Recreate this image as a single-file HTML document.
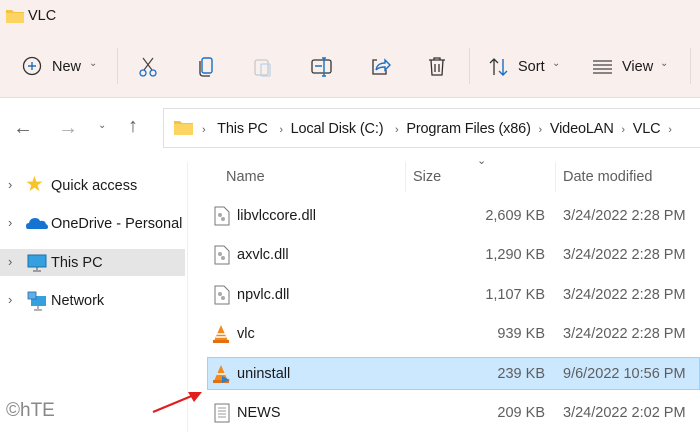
<!DOCTYPE html>
<html><head><style>
body{margin:0;width:700px;height:432px;overflow:hidden;background:#fff;font-family:"Liberation Sans",sans-serif;color:#1a1a1a;position:relative}
.a{position:absolute;white-space:nowrap}
.top{position:absolute;left:0;top:0;width:700px;height:97px;background:#f9f0ed;border-bottom:1px solid #e3dedc}
.t{font-size:14.5px}
.g{color:#5e5e5e}
.sep{position:absolute;width:1px;background:#e2dbd8}
</style></head><body>
<div class="top"></div>
<svg class="a" style="left:5px;top:8px" width="20" height="16"><path d="M1 2h6l2 2h10v11H1z" fill="#f5c342"/><path d="M1 5h18v10H1z" fill="#fcd462"/></svg>
<div class="a t" style="left:28px;top:8px">VLC</div>
<svg class="a" style="left:22px;top:56px" width="20" height="20"><circle cx="10" cy="10" r="8.5" fill="none" stroke="#333" stroke-width="1.3"/><path d="M10 6v8M6 10h8" stroke="#1a6fc4" stroke-width="1.4"/></svg>
<div class="a t" style="left:52px;top:59px">New</div>
<div class="a g" style="left:89px;top:58px;font-size:10px">⌄</div>
<div class="sep" style="left:117px;top:48px;height:36px"></div>
<svg class="a" style="left:138px;top:56px" width="20" height="22"><path d="M5 2l9 12M15 2L6 14" stroke="#444" stroke-width="1.2"/><circle cx="5" cy="17" r="3" fill="none" stroke="#1a6fc4" stroke-width="1.3"/><circle cx="15" cy="17" r="3" fill="none" stroke="#1a6fc4" stroke-width="1.3"/></svg>
<svg class="a" style="left:197px;top:56px" width="20" height="22"><rect x="5" y="2" width="10" height="15" rx="2" fill="none" stroke="#1a6fc4" stroke-width="1.4"/><path d="M3 5v12q0 3 3 3h7" fill="none" stroke="#333" stroke-width="1.3"/></svg>
<svg class="a" style="left:253px;top:56px" width="20" height="22"><rect x="2" y="4" width="13" height="15" rx="2" fill="none" stroke="#c8c8c8" stroke-width="1.3"/><rect x="8" y="8" width="9" height="12" rx="1" fill="none" stroke="#b8d4ee" stroke-width="1.3"/></svg>
<svg class="a" style="left:310px;top:56px" width="24" height="22"><rect x="2" y="4" width="19" height="13" rx="2" fill="none" stroke="#333" stroke-width="1.3"/><path d="M5 10h7M14 2v18M12 2h4M12 20h4" stroke="#1a6fc4" stroke-width="1.4"/></svg>
<svg class="a" style="left:369px;top:56px" width="22" height="22"><path d="M8 4H4v14h13v-4" fill="none" stroke="#333" stroke-width="1.3"/><path d="M7 14q1-7 9-7V4l5 5-5 5v-3q-6 0-9 3" fill="none" stroke="#1a6fc4" stroke-width="1.4"/></svg>
<svg class="a" style="left:427px;top:56px" width="20" height="22"><path d="M2 4h16M7 4V2h6v2M4 4l1 15h10l1-15M8 8v8M12 8v8" fill="none" stroke="#333" stroke-width="1.3"/></svg>
<div class="sep" style="left:469px;top:48px;height:36px"></div>
<svg class="a" style="left:488px;top:57px" width="22" height="20"><path d="M6 18V2M2 6l4-4 4 4" fill="none" stroke="#333" stroke-width="1.3"/><path d="M15 2v16M11 14l4 4 4-4" fill="none" stroke="#1a6fc4" stroke-width="1.4"/></svg>
<div class="a t" style="left:518px;top:59px">Sort</div>
<div class="a g" style="left:552px;top:58px;font-size:10px">⌄</div>
<svg class="a" style="left:592px;top:58px" width="22" height="16"><path d="M1 3h19M1 7h19M1 11h19M1 15h19" stroke="#444" stroke-width="1.3"/></svg>
<div class="a t" style="left:622px;top:59px">View</div>
<div class="a g" style="left:660px;top:58px;font-size:10px">⌄</div>
<div class="sep" style="left:690px;top:48px;height:36px"></div>

<div class="a g" style="left:13px;top:117px;font-size:20px">←</div>
<div class="a" style="left:58px;top:117px;font-size:20px;color:#aaa">→</div>
<div class="a g" style="left:98px;top:120px;font-size:10px">⌄</div>
<div class="a g" style="left:128px;top:115px;font-size:20px">↑</div>
<div class="a" style="left:163px;top:108px;width:560px;height:40px;border:1px solid #e0e0e0;box-sizing:border-box"></div>
<svg class="a" style="left:174px;top:120px" width="19" height="15"><path d="M0 1h6l2 2h11v12H0z" fill="#f5c342"/><path d="M0 4h19v11H0z" fill="#fcd462"/></svg>
<div class="a t" style="left:202px;top:121px;letter-spacing:-0.15px"><span class="g" style="font-size:11px">›</span>&nbsp;&nbsp;&nbsp;This PC&nbsp;&nbsp;&nbsp;<span class="g" style="font-size:11px">›</span>&nbsp;&nbsp;Local Disk (C:)&nbsp;&nbsp;&nbsp;<span class="g" style="font-size:11px">›</span>&nbsp;&nbsp;Program Files (x86)&nbsp;&nbsp;<span class="g" style="font-size:11px">›</span>&nbsp;&nbsp;VideoLAN&nbsp;&nbsp;<span class="g" style="font-size:11px">›</span>&nbsp;&nbsp;VLC&nbsp;&nbsp;<span class="g" style="font-size:11px">›</span></div>

<div class="a" style="left:187px;top:162px;width:1px;height:270px;background:#f0f0f0"></div>
<div class="a" style="left:0;top:249px;width:185px;height:27px;background:#e5e5e5"></div>
<div class="a g" style="left:8px;top:177px;font-size:13px">›</div>
<div class="a g" style="left:8px;top:215px;font-size:13px">›</div>
<div class="a g" style="left:8px;top:254px;font-size:13px">›</div>
<div class="a g" style="left:8px;top:292px;font-size:13px">›</div>
<div class="a" style="left:25px;top:172px;font-size:21px;color:#f7c325">★</div>
<svg class="a" style="left:26px;top:216px" width="22" height="14"><path d="M2 13q-2 0-2-3t3-3q1-5 6-5 4 0 5 3 5-1 6 3 2 1 2 3t-2 2z" fill="#1673d1"/></svg>
<svg class="a" style="left:27px;top:253px" width="20" height="20"><rect x="1" y="2" width="18" height="12" fill="#35a0e0" stroke="#1a6fa8"/><path d="M10 14v3M6 18h8" stroke="#555"/></svg>
<svg class="a" style="left:27px;top:291px" width="20" height="20"><rect x="4" y="5" width="15" height="10" fill="#35a0e0"/><rect x="1" y="1" width="8" height="7" fill="#5fb0e8" stroke="#2a6a9e" stroke-width=".8"/><path d="M11 15v3M7 19h8" stroke="#666"/></svg>
<div class="a t" style="left:51px;top:178px">Quick access</div>
<div class="a t" style="left:51px;top:216px">OneDrive - Personal</div>
<div class="a t" style="left:51px;top:255px">This PC</div>
<div class="a t" style="left:51px;top:293px">Network</div>
<div class="a" style="left:6px;top:400px;font-size:19px;color:#888">©hTE</div>
<svg class="a" style="left:150px;top:385px" width="56" height="30"><path d="M3 27L44 10" stroke="#e21d1d" stroke-width="2.2"/><path d="M52 7L38 7 44 17z" fill="#e21d1d"/></svg>

<div class="a g" style="left:477px;top:154px;font-size:11px">⌄</div>
<div class="a" style="left:405px;top:162px;width:1px;height:30px;background:#eee"></div>
<div class="a" style="left:555px;top:162px;width:1px;height:30px;background:#eee"></div>
<div class="a t g" style="left:226px;top:169px">Name</div>
<div class="a t g" style="left:413px;top:169px">Size</div>
<div class="a t g" style="left:563px;top:169px">Date modified</div>

<div class="a" style="left:207px;top:357px;width:493px;height:33px;background:#cce8ff;border:1px solid #99d1ff;box-sizing:border-box"></div>

<svg class="a" style="left:214px;top:206px" width="16" height="20"><path d="M1 1h9l5 5v13H1z" fill="#fff" stroke="#777"/><circle cx="6" cy="9" r="2" fill="#aaa"/><circle cx="9" cy="13" r="2" fill="#aaa"/></svg>
<svg class="a" style="left:214px;top:245px" width="16" height="20"><path d="M1 1h9l5 5v13H1z" fill="#fff" stroke="#777"/><circle cx="6" cy="9" r="2" fill="#aaa"/><circle cx="9" cy="13" r="2" fill="#aaa"/></svg>
<svg class="a" style="left:214px;top:285px" width="16" height="20"><path d="M1 1h9l5 5v13H1z" fill="#fff" stroke="#777"/><circle cx="6" cy="9" r="2" fill="#aaa"/><circle cx="9" cy="13" r="2" fill="#aaa"/></svg>
<svg class="a" style="left:212px;top:324px" width="18" height="20"><path d="M9 1L2 17h14z" fill="#f08a1c"/><path d="M5 10h8M4 13h10" stroke="#fff" stroke-width="1.5"/><rect x="1" y="16" width="16" height="3" fill="#e07010"/></svg>
<svg class="a" style="left:212px;top:364px" width="20" height="20"><path d="M9 1L2 17h14z" fill="#f08a1c"/><path d="M5 10h8" stroke="#fff" stroke-width="1.5"/><rect x="1" y="16" width="16" height="3" fill="#e07010"/><path d="M10 12l8 4-8 3z" fill="#2e7fd0"/></svg>
<svg class="a" style="left:214px;top:403px" width="16" height="20"><path d="M1 1h14v18H1z" fill="#fff" stroke="#777"/><path d="M4 5h8M4 8h8M4 11h8M4 14h8" stroke="#999"/></svg>

<div class="a t" style="left:237px;top:208px">libvlccore.dll</div>
<div class="a t" style="left:237px;top:247px">axvlc.dll</div>
<div class="a t" style="left:237px;top:287px">npvlc.dll</div>
<div class="a t" style="left:237px;top:326px">vlc</div>
<div class="a t" style="left:237px;top:366px">uninstall</div>
<div class="a t" style="left:237px;top:405px">NEWS</div>

<div class="a t g" style="right:155px;top:208px">2,609 KB</div>
<div class="a t g" style="right:155px;top:247px">1,290 KB</div>
<div class="a t g" style="right:155px;top:287px">1,107 KB</div>
<div class="a t g" style="right:155px;top:326px">939 KB</div>
<div class="a t g" style="right:155px;top:366px">239 KB</div>
<div class="a t g" style="right:155px;top:405px">209 KB</div>
<div class="a t g" style="left:563px;top:208px">3/24/2022 2:28 PM</div>
<div class="a t g" style="left:563px;top:247px">3/24/2022 2:28 PM</div>
<div class="a t g" style="left:563px;top:287px">3/24/2022 2:28 PM</div>
<div class="a t g" style="left:563px;top:326px">3/24/2022 2:28 PM</div>
<div class="a t g" style="left:563px;top:366px">9/6/2022 10:56 PM</div>
<div class="a t g" style="left:563px;top:405px">3/24/2022 2:02 PM</div>
</body></html>
